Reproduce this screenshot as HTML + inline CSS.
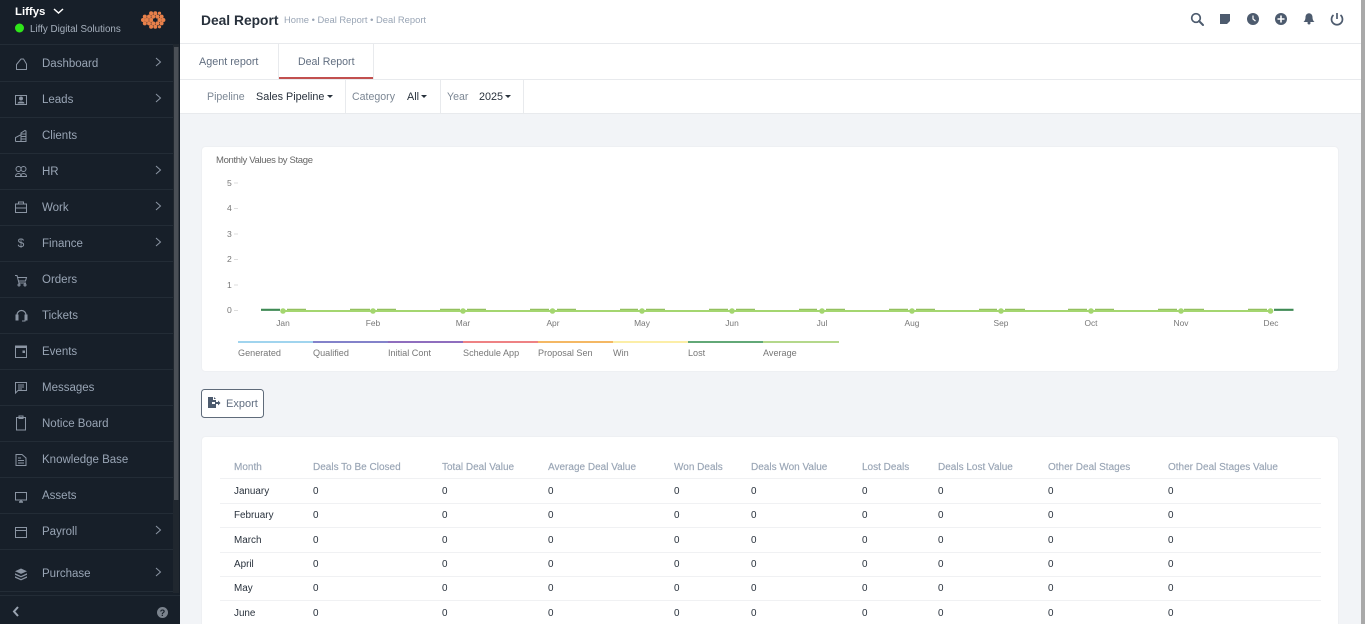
<!DOCTYPE html>
<html><head><meta charset="utf-8"><title>Deal Report</title>
<style>
html,body{margin:0;padding:0;width:1365px;height:624px;overflow:hidden;background:#f2f4f7}
svg{display:block;font-family:"Liberation Sans",sans-serif}
.m{font-size:11.5px;fill:#99a5b5}
.i{fill:none;stroke:#8b95a3;stroke-width:1}
.c{fill:none;stroke:#8b95a3;stroke-width:1}
.h{font-size:10px;fill:#99a5b5;stroke:#99a5b5;stroke-width:.15px}
.d{font-size:9.9px;fill:#28313c}
.l{fill:#777;text-anchor:middle;font-size:8.4px}
.y{font-size:8.6px;fill:#777}
.g{font-size:9.1px;fill:#777}
</style></head><body>
<svg width="1365" height="624" viewBox="0 0 1365 624" xmlns="http://www.w3.org/2000/svg">
<rect width="1365" height="624" fill="#f2f4f7"/>
<!-- top bars -->
<rect x="180" width="1185" height="44" fill="#fff"/>
<rect x="180" y="43" width="1185" height="1" fill="#e8eaed"/>
<rect x="180" y="44" width="1185" height="36" fill="#fff"/>
<rect x="180" y="79" width="1185" height="1" fill="#e8eaed"/>
<rect x="180" y="80" width="1185" height="33" fill="#fff"/>
<rect x="180" y="113" width="1185" height="1" fill="#e8eaed"/>
<rect x="278" y="44" width="1" height="35" fill="#e8eaed"/>
<rect x="373" y="44" width="1" height="35" fill="#e8eaed"/>
<rect x="279" y="77" width="94" height="2" fill="#c2504f"/>
<rect x="345" y="80" width="1" height="33" fill="#e8eaed"/>
<rect x="440" y="80" width="1" height="33" fill="#e8eaed"/>
<rect x="523" y="80" width="1" height="33" fill="#e8eaed"/>
<text x="201" y="25" font-size="13.8" font-weight="bold" fill="#28313c">Deal Report</text>
<text x="284" y="23" font-size="9.4" fill="#99a5b5">Home • Deal Report • Deal Report</text>
<text x="199" y="65" font-size="10.8" fill="#616e80">Agent report</text>
<text x="298" y="65" font-size="10.6" fill="#616e80">Deal Report</text>
<text x="207" y="100" font-size="10.6" fill="#7c8794">Pipeline</text>
<text x="256" y="100" font-size="10.8" fill="#28313c">Sales Pipeline</text>
<path d="M327 95h6l-3 3z" fill="#28313c"/>
<text x="352" y="100" font-size="10.6" fill="#7c8794">Category</text>
<text x="407" y="100" font-size="10.8" fill="#28313c">All</text>
<path d="M421 95h6l-3 3z" fill="#28313c"/>
<text x="447" y="100" font-size="10.6" fill="#7c8794">Year</text>
<text x="479" y="100" font-size="10.8" fill="#28313c">2025</text>
<path d="M505 95h6l-3 3z" fill="#28313c"/>
<!-- header icons -->
<g fill="#4d5b6e">
<circle cx="1196" cy="18" r="4.3" fill="none" stroke="#4d5b6e" stroke-width="1.7"/>
<path d="M1199 21l4 4" stroke="#4d5b6e" stroke-width="2" stroke-linecap="round"/>
<path d="M1220 14h10v7l-3 3h-7z"/>
<circle cx="1253" cy="19" r="6"/>
<path d="M1253 15.500v3.500l2.500 2" fill="none" stroke="#fff" stroke-width="1.200"/>
<circle cx="1281" cy="19" r="6"/>
<path d="M1281 15.500v7M1277.500 19h7" fill="none" stroke="#fff" stroke-width="1.600"/>
<path d="M1303.500 22h11c-1-1-2-2-2-5 0-2-1.500-3.800-3.500-3.800s-3.500 1.800-3.500 3.800c0 3-1 4-2 5z"/>
<circle cx="1309" cy="23" r="1.500"/>
<path d="M1333.500 15a5.500 5.500 0 1 0 7 0M1337 13v6" fill="none" stroke="#4d5b6e" stroke-width="1.700"/>
</g>
<!-- page scrollbar -->
<rect x="1361" y="0" width="4" height="624" fill="#a9a9a9"/>
<!-- chart card -->
<rect x="201.500" y="146.500" width="1137" height="225" rx="4" fill="#fff" stroke="#eef0f3"/>
<text x="216" y="163" font-size="9.500" fill="#666" textLength="97" lengthAdjust="spacing">Monthly Values by Stage</text>
<g class="y"><text x="227" y="186">5</text><text x="227" y="211">4</text><text x="227" y="237">3</text><text x="227" y="262">2</text><text x="227" y="288">1</text><text x="227" y="313">0</text></g>
<path d="M234 183h4M234 208.500h4M234 234h4M234 259.500h4M234 285h4M234 310.500h4" stroke="#ddd" stroke-width="1"/>
<!-- bars -->
<g stroke="#93c05f" stroke-width="2.200">
<path d="M261 309.800h19" stroke="#3f8a55"/>
<path d="M287 309.800h19M350 309.800h20M377 309.800h19M440 309.800h20M467 309.800h19M530 309.800h19M557 309.800h19M620 309.800h18M646 309.800h19M709 309.800h19M736 309.800h19M799 309.800h18M826 309.800h19M889 309.800h19M916 309.800h19M979 309.800h18M1005 309.800h20M1068 309.800h19M1095 309.800h19M1158 309.800h19M1184 309.800h20M1248 309.800h19"/>
<path d="M1274 309.800h19.500" stroke="#3f8a55"/>
</g>
<path d="M283 311H1270" stroke="#a4d670" stroke-width="2"/>
<g fill="#a4d670"><circle cx="283" cy="311" r="2.800"/><circle cx="373" cy="311" r="2.800"/><circle cx="463" cy="311" r="2.800"/><circle cx="552.500" cy="311" r="2.800"/><circle cx="642" cy="311" r="2.800"/><circle cx="732" cy="311" r="2.800"/><circle cx="822" cy="311" r="2.800"/><circle cx="912" cy="311" r="2.800"/><circle cx="1001" cy="311" r="2.800"/><circle cx="1091" cy="311" r="2.800"/><circle cx="1181" cy="311" r="2.800"/><circle cx="1270.500" cy="311" r="2.800"/></g>
<g class="l"><text x="283" y="326">Jan</text><text x="373" y="326">Feb</text><text x="463" y="326">Mar</text><text x="553" y="326">Apr</text><text x="642" y="326">May</text><text x="732" y="326">Jun</text><text x="822" y="326">Jul</text><text x="912" y="326">Aug</text><text x="1001" y="326">Sep</text><text x="1091" y="326">Oct</text><text x="1181" y="326">Nov</text><text x="1271" y="326">Dec</text></g>
<g stroke-width="1.500">
<path d="M238 342h75" stroke="#81c6e8"/><path d="M313 342h75" stroke="#5a59b8"/><path d="M388 342h75" stroke="#6a3fa8"/><path d="M463 342h75" stroke="#e8595c"/><path d="M538 342h75" stroke="#f0a030"/><path d="M613 342h75" stroke="#fbe88a"/><path d="M688 342h75" stroke="#2e8b4a"/><path d="M763 342h76" stroke="#9ccc65"/>
</g>
<g class="g"><text x="238" y="356">Generated</text><text x="313" y="356">Qualified</text><text x="388" y="356">Initial Cont</text><text x="463" y="356">Schedule App</text><text x="538" y="356">Proposal Sen</text><text x="613" y="356">Win</text><text x="688" y="356">Lost</text><text x="763" y="356">Average</text></g>
<!-- export -->
<rect x="201.500" y="389.500" width="62" height="28" rx="3" fill="#fff" stroke="#5f6b7a"/>
<path d="M208 397h5v3h3v2h-4v2h4v4h-8zM214 397l2 2h-2zM215 402h3v-1.500l2.500 2.500-2.500 2.500V404h-3z" fill="#4d5b6e"/>
<text x="226" y="407" font-size="11" fill="#616e80">Export</text>
<!-- table card -->
<rect x="201.500" y="436.500" width="1137" height="200" rx="4" fill="#fff" stroke="#eef0f3"/>
<g fill="#f0f1f3"><rect x="220" y="478" width="1101" height="1"/><rect x="220" y="503" width="1101" height="1"/><rect x="220" y="527" width="1101" height="1"/><rect x="220" y="552" width="1101" height="1"/><rect x="220" y="576" width="1101" height="1"/><rect x="220" y="600" width="1101" height="1"/></g>
<g class="h"><text x="234" y="470">Month</text><text x="313" y="470">Deals To Be Closed</text><text x="442" y="470">Total Deal Value</text><text x="548" y="470">Average Deal Value</text><text x="674" y="470">Won Deals</text><text x="751" y="470">Deals Won Value</text><text x="862" y="470">Lost Deals</text><text x="938" y="470">Deals Lost Value</text><text x="1048" y="470">Other Deal Stages</text><text x="1168" y="470">Other Deal Stages Value</text></g>
<g class="d">
<text x="234" y="494">January</text><text x="234" y="518">February</text><text x="234" y="543">March</text><text x="234" y="567">April</text><text x="234" y="591">May</text><text x="234" y="616">June</text>
<text x="313" y="494">0</text><text x="442" y="494">0</text><text x="548" y="494">0</text><text x="674" y="494">0</text><text x="751" y="494">0</text><text x="862" y="494">0</text><text x="938" y="494">0</text><text x="1048" y="494">0</text><text x="1168" y="494">0</text>
<text x="313" y="518">0</text><text x="442" y="518">0</text><text x="548" y="518">0</text><text x="674" y="518">0</text><text x="751" y="518">0</text><text x="862" y="518">0</text><text x="938" y="518">0</text><text x="1048" y="518">0</text><text x="1168" y="518">0</text>
<text x="313" y="543">0</text><text x="442" y="543">0</text><text x="548" y="543">0</text><text x="674" y="543">0</text><text x="751" y="543">0</text><text x="862" y="543">0</text><text x="938" y="543">0</text><text x="1048" y="543">0</text><text x="1168" y="543">0</text>
<text x="313" y="567">0</text><text x="442" y="567">0</text><text x="548" y="567">0</text><text x="674" y="567">0</text><text x="751" y="567">0</text><text x="862" y="567">0</text><text x="938" y="567">0</text><text x="1048" y="567">0</text><text x="1168" y="567">0</text>
<text x="313" y="591">0</text><text x="442" y="591">0</text><text x="548" y="591">0</text><text x="674" y="591">0</text><text x="751" y="591">0</text><text x="862" y="591">0</text><text x="938" y="591">0</text><text x="1048" y="591">0</text><text x="1168" y="591">0</text>
<text x="313" y="616">0</text><text x="442" y="616">0</text><text x="548" y="616">0</text><text x="674" y="616">0</text><text x="751" y="616">0</text><text x="862" y="616">0</text><text x="938" y="616">0</text><text x="1048" y="616">0</text><text x="1168" y="616">0</text>
</g>
<!-- sidebar -->
<rect width="180" height="624" fill="#171f29"/>
<rect x="173" y="44" width="6" height="549" fill="#20272f"/>
<rect x="174" y="47" width="4.500" height="453" fill="#4a4f56"/>
<g fill="#232c36"><rect y="44" width="173" height="1"/><rect y="81" width="173" height="1"/><rect y="117" width="173" height="1"/><rect y="153" width="173" height="1"/><rect y="189" width="173" height="1"/><rect y="225" width="173" height="1"/><rect y="261" width="173" height="1"/><rect y="297" width="173" height="1"/><rect y="333" width="173" height="1"/><rect y="369" width="173" height="1"/><rect y="405" width="173" height="1"/><rect y="441" width="173" height="1"/><rect y="477" width="173" height="1"/><rect y="513" width="173" height="1"/><rect y="549" width="173" height="1"/><rect y="591" width="173" height="1"/><rect y="595" width="180" height="1"/></g>
<text x="15" y="15" font-size="11.400" font-weight="bold" fill="#fff">Liffys</text>
<path d="M54 9l4.500 4 4.500-4" fill="none" stroke="#fff" stroke-width="1.500"/>
<circle cx="19.500" cy="28" r="4.500" fill="#2fe61a"/>
<text x="30" y="32" font-size="9.800" fill="#a6b0bd">Liffy Digital Solutions</text>
<g fill="#e8804a">
<circle cx="151.100" cy="13.200" r="2"/><circle cx="155.300" cy="13.200" r="2"/>
<circle cx="144.800" cy="16.600" r="2"/><circle cx="149" cy="16.600" r="2"/><circle cx="153.200" cy="16.600" r="2"/><circle cx="157.400" cy="16.600" r="2"/><circle cx="161.600" cy="16.600" r="2"/>
<circle cx="143" cy="20" r="2"/><circle cx="146.900" cy="20" r="2"/><circle cx="151.100" cy="20" r="2"/><circle cx="159.500" cy="20" r="2"/><circle cx="163.400" cy="20" r="2"/>
<circle cx="144.800" cy="23.400" r="2"/><circle cx="149" cy="23.400" r="2"/><circle cx="153.200" cy="23.400" r="2"/><circle cx="157.400" cy="23.400" r="2"/><circle cx="161.600" cy="23.400" r="2"/>
<circle cx="151.100" cy="26.800" r="2"/><circle cx="155.300" cy="26.800" r="2"/><circle cx="159.500" cy="13.200" r="1.600"/><circle cx="159.500" cy="26.800" r="1.600"/>
</g>
<g class="m">
<text x="42" y="67">Dashboard</text><text x="42" y="103">Leads</text><text x="42" y="139">Clients</text><text x="42" y="175">HR</text><text x="42" y="211">Work</text><text x="42" y="247">Finance</text><text x="42" y="283">Orders</text><text x="42" y="319">Tickets</text><text x="42" y="355">Events</text><text x="42" y="391">Messages</text><text x="42" y="427">Notice Board</text><text x="42" y="463">Knowledge Base</text><text x="42" y="499">Assets</text><text x="42" y="535">Payroll</text><text x="42" y="577">Purchase</text>
</g>
<g class="c"><path d="M156 58l4.500 4-4.500 4M156 94l4.500 4-4.500 4M156 166l4.500 4-4.500 4M156 202l4.500 4-4.500 4M156 238l4.500 4-4.500 4M156 526l4.500 4-4.500 4M156 568l4.500 4-4.500 4"/></g>
<g class="i">
<path d="M16.500 69.500v-5l4.500-5.500h2.500l3 5v5.500z" stroke-linejoin="round"/>
<rect x="15.500" y="95.500" width="11" height="9"/><circle cx="21" cy="98.500" r="1.500" fill="#8b95a3"/><path d="M18 103.500c0-2 6-2 6 0" fill="#8b95a3"/>
<path d="M15.500 141.500h10.500v-10.500l-1-.5-4 2.500v8.500M15.500 141.500v-4l5-2.500M21 134h5M21 136.500h5M21 139h5"/>
<circle cx="18.500" cy="169" r="2.500"/><circle cx="23.500" cy="169" r="2.500"/><path d="M15.500 176.500c0-4 6-4 6 0zM20.500 176.500c0-4 6-4 6 0z"/>
<rect x="15.500" y="204" width="11" height="8.500"/><path d="M18.500 204v-2h5v2M15.500 208h11"/>
<path d="M15 275.500h2l2 7.500h7M17.500 277.500h9l-1 3.500h-7"/>
<circle cx="19" cy="285" r="1"/><circle cx="25" cy="285" r="1"/>
<path d="M17 316v-1a4.500 4.500 0 0 1 9 0v1" stroke-width="1.200"/><rect x="16" y="315" width="2" height="5" fill="#8b95a3"/><rect x="25" y="315" width="2" height="5" fill="#8b95a3"/><path d="M25 320v1h-3"/>
<rect x="15.500" y="346.500" width="11" height="11"/><rect x="15.500" y="346" width="11" height="1.500" fill="#8b95a3"/><rect x="23" y="351" width="1.500" height="1.500" fill="#8b95a3"/>
<path d="M15.500 382.500h11v8h-8.500l-2.500 2.500zM18 385h6M18 387h6M18 389h4"/>
<path d="M16.500 417.500h9v12.500h-9zM19 416h4v2.500h-4z"/>
<path d="M16 454.500h6l4 3.500v7.500h-10zM18 458h3M18 460.500h6M18 463h6"/>
<rect x="15.500" y="492.500" width="11" height="7.500"/><path d="M19 502h4M21 500v2" stroke-width="1.500"/>
<rect x="15.500" y="527.500" width="11" height="10"/><path d="M15.500 530.500h11"/>
</g>
<path d="M21 568.500l6 2.700-6 2.700-6-2.700zM15 573.300l6 2.700 6-2.700v1.400l-6 2.700-6-2.700zM15 576.300l6 2.700 6-2.700v1.400l-6 2.700-6-2.700z" fill="#8b95a3"/>
<text x="21" y="247" font-size="12" fill="#8b95a3" text-anchor="middle">$</text>
<path d="M18 607l-4 4.500 4 4.500" fill="none" stroke="#9aa4b1" stroke-width="2"/>
<circle cx="162.500" cy="612.500" r="5.500" fill="#7b838d"/>
<text x="162.500" y="616" font-size="9" font-weight="bold" fill="#171f29" text-anchor="middle">?</text>
</svg>
</body></html>
